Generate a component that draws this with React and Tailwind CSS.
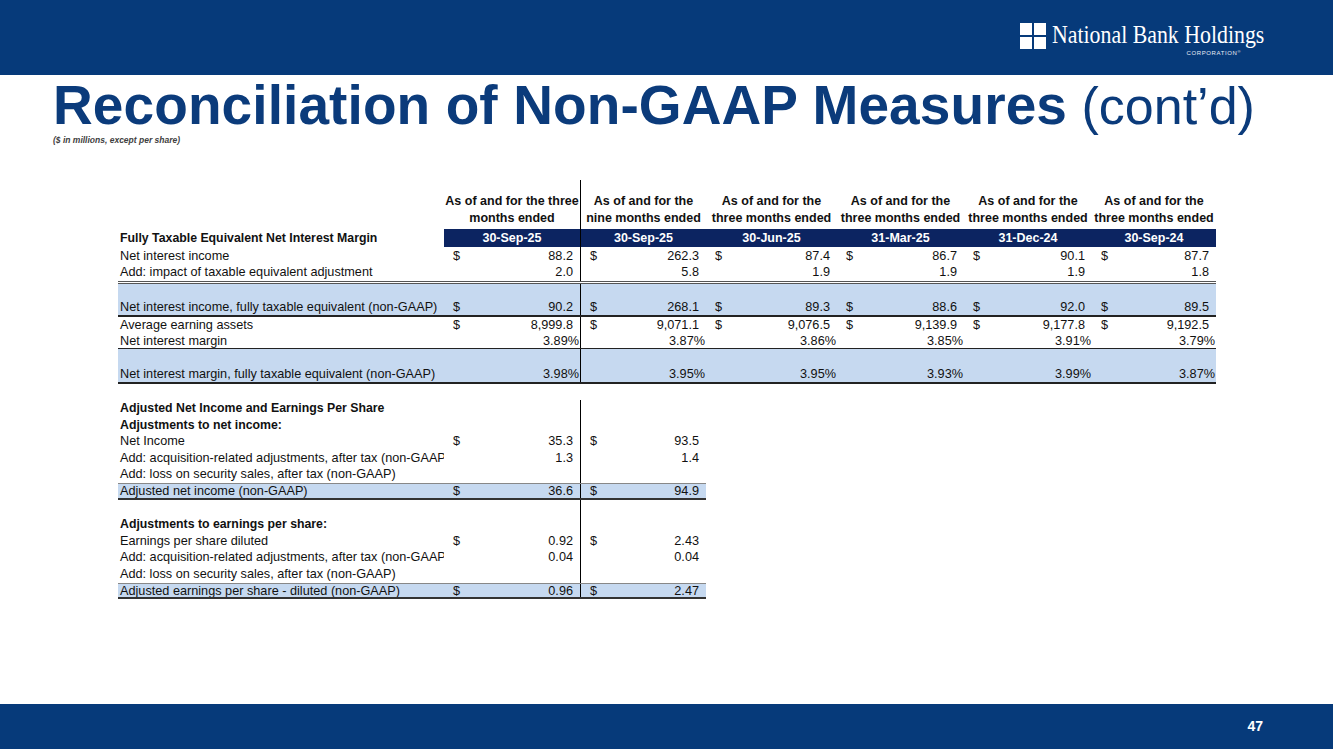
import React from 'react';

const COLS = ['w-[137px]', 'w-[125px]', 'w-[131px]', 'w-[127px]', 'w-[128px]', 'w-[124px]'];

const headers = [
    ['As of and for the three', 'months ended'],
    ['As of and for the', 'nine months ended'],
    ['As of and for the', 'three months ended'],
    ['As of and for the', 'three months ended'],
    ['As of and for the', 'three months ended'],
    ['As of and for the', 'three months ended'],
];

const dates = ['30-Sep-25', '30-Sep-25', '30-Jun-25', '31-Mar-25', '31-Dec-24', '30-Sep-24'];

const Cell = ({ w, first, val }) => {
    const d = val && val.startsWith('$');
    const v = d ? val.slice(1) : val;
    const pct = v && v.endsWith('%');
    return (
        <div className={`${w} shrink-0 flex justify-between pl-[9px] ${pct ? 'pr-[1px]' : 'pr-[7px]'} ${first ? 'border-r border-black' : ''}`}>
            <span>{d ? '$' : ''}</span>
            <span>{v}</span>
        </div>
    );
};

// bordered rows use box-content so the rule sits under the text, not over it
const Row = ({ label, bold, vals = [], n = 6, h = 'h-[17px]', lh = 'leading-[18px]', cls = '' }) => (
    <div className={`flex ${h} ${lh} ${cls}`}>
        <div className={`w-[326px] shrink-0 pl-[2px] overflow-hidden whitespace-nowrap ${bold ? 'font-bold text-[12.3px]' : ''}`}>
            {label}
        </div>
        {COLS.slice(0, n).map((w, i) => (
            <Cell key={i} w={w} first={i === 0} val={vals[i]} />
        ))}
    </div>
);

const Logo = () => (
    <div className="flex items-start gap-[6px]">
        <svg width="26" height="26" viewBox="0 0 26 26" className="mt-[1px]">
            <rect x="0" y="0" width="12" height="12" fill="#fff" />
            <rect x="14" y="0" width="12" height="12" fill="#fff" />
            <rect x="0" y="14" width="12" height="12" fill="#fff" />
            <rect x="14" y="14" width="12" height="12" fill="#fff" />
        </svg>
        <div className="w-[213px] flex flex-col">
            <div className="h-[26px] overflow-visible">
                <div className="w-[253px] origin-left scale-x-[0.84] font-['Liberation_Serif',serif] text-[26px] leading-[26px] text-white whitespace-nowrap">
                    National Bank Holdings
                </div>
            </div>
            <div className="mt-[2px] flex justify-end pr-[24px]">
                <span className="text-[6px] leading-[6px] tracking-[0.6px] text-[#e6ecf5]">
                    CORPORATION<sup className="text-[4px]">®</sup>
                </span>
            </div>
        </div>
    </div>
);

const band = 'box-content h-[13.6px] border-t border-b-2 border-t-[#888] border-b-[#333] w-[588px] bg-[#c6d9f0]';

const App = () => {
    return (
        <div className="w-[1333px] h-[749px] flex flex-col bg-white font-['Liberation_Sans',Arial,sans-serif] text-[#111] overflow-hidden">
            <div className="h-[75px] shrink-0 bg-[#063a7a] flex justify-end pt-[22px] pr-[68px]">
                <Logo />
            </div>

            <div className="flex-1">
                <div className="pl-[53px] pt-[3px]">
                    <h1 className="text-[55px] leading-[55px] text-[#0b3b7b] whitespace-nowrap">
                        <span className="font-bold tracking-[0.1px]">Reconciliation of Non-GAAP Measures</span>
                        <span className="text-[52px]"> (cont’d)</span>
                    </h1>
                    <p className="mt-[1px] text-[8.5px] leading-[10px] italic font-bold text-[#404040]">
                        ($ in millions, except per share)
                    </p>
                </div>

                <div className="pl-[118px] mt-[35px] text-[12.7px]">
                    <div className="w-[1098px]">
                        {/* Fully taxable equivalent NIM */}
                        <div className="flex h-[49px] font-bold text-[12.5px] leading-[17px]">
                            <div className="w-[326px] shrink-0" />
                            {COLS.map((w, i) => (
                                <div key={i} className={`${w} shrink-0 flex flex-col justify-end items-center pb-[2px] whitespace-nowrap ${i === 0 ? 'border-r border-black' : ''}`}>
                                    <span>{headers[i][0]}</span>
                                    <span>{headers[i][1]}</span>
                                </div>
                            ))}
                        </div>
                        <div className="flex h-[18px] leading-[19px] font-bold text-[12.5px]">
                            <div className="w-[326px] shrink-0 pl-[2px] whitespace-nowrap text-[12.3px]">Fully Taxable Equivalent Net Interest Margin</div>
                            {COLS.map((w, i) => (
                                <div key={i} className={`${w} shrink-0 bg-[#0c2461] text-white text-center ${i === 0 ? 'border-r border-black' : ''} ${i === 5 ? 'mr-[2px]' : ''}`}>
                                    {dates[i]}
                                </div>
                            ))}
                        </div>
                        <Row label="Net interest income" vals={['$88.2', '$262.3', '$87.4', '$86.7', '$90.1', '$87.7']} />
                        <Row label="Add: impact of taxable equivalent adjustment" vals={['2.0', '5.8', '1.9', '1.9', '1.9', '1.8']} lh="leading-[17px]" cls="box-content border-b-[3px] border-double border-[#555]" />
                        <div className="bg-[#c6d9f0]">
                            <Row h="h-[14px]" />
                            <Row label="Net interest income, fully taxable equivalent (non-GAAP)" vals={['$90.2', '$268.1', '$89.3', '$88.6', '$92.0', '$89.5']} cls="box-content border-b-2 border-[#222]" />
                        </div>
                        <Row label="Average earning assets" vals={['$8,999.8', '$9,071.1', '$9,076.5', '$9,139.9', '$9,177.8', '$9,192.5']} h="h-[15px]" lh="leading-[16px]" />
                        <Row label="Net interest margin" vals={['3.89%', '3.87%', '3.86%', '3.85%', '3.91%', '3.79%']} h="h-[16px]" lh="leading-[18px]" cls="box-content border-b border-[#222]" />
                        <div className="bg-[#c6d9f0]">
                            <Row h="h-[16px]" />
                            <Row label="Net interest margin, fully taxable equivalent (non-GAAP)" vals={['3.98%', '3.95%', '3.95%', '3.93%', '3.99%', '3.87%']} cls="box-content border-b-2 border-[#222]" />
                        </div>

                        {/* Adjusted net income and EPS */}
                        <div className="mt-[16px]">
                            <Row n={2} h="h-[16.6px]" lh="leading-[17px]" bold label="Adjusted Net Income and Earnings Per Share" />
                            <Row n={2} h="h-[16.6px]" lh="leading-[17px]" bold label="Adjustments to net income:" />
                            <Row n={2} h="h-[16.6px]" lh="leading-[17px]" label="Net Income" vals={['$35.3', '$93.5']} />
                            <Row n={2} h="h-[16.6px]" lh="leading-[17px]" label="Add: acquisition-related adjustments, after tax (non-GAAP)" vals={['1.3', '1.4']} />
                            <Row n={2} h="h-[16.6px]" lh="leading-[17px]" label="Add: loss on security sales, after tax (non-GAAP)" />
                            <Row n={2} h="" lh="leading-[14px]" label="Adjusted net income (non-GAAP)" vals={['$36.6', '$94.9']} cls={band} />
                            <Row n={2} h="h-[16.6px]" />
                            <Row n={2} h="h-[16.6px]" lh="leading-[17px]" bold label="Adjustments to earnings per share:" />
                            <Row n={2} h="h-[16.6px]" lh="leading-[17px]" label="Earnings per share diluted" vals={['$0.92', '$2.43']} />
                            <Row n={2} h="h-[16.6px]" lh="leading-[17px]" label="Add: acquisition-related adjustments, after tax (non-GAAP)" vals={['0.04', '0.04']} />
                            <Row n={2} h="h-[16.6px]" lh="leading-[17px]" label="Add: loss on security sales, after tax (non-GAAP)" />
                            <Row n={2} h="" lh="leading-[14px]" label="Adjusted earnings per share - diluted (non-GAAP)" vals={['$0.96', '$2.47']} cls={band} />
                        </div>
                    </div>
                </div>
            </div>

            <div className="h-[45px] shrink-0 bg-[#063a7a] flex justify-end items-start pt-[14px] pr-[70px]">
                <span className="text-white font-bold text-[14px] leading-[16px]">47</span>
            </div>
        </div>
    );
};

export default App;
